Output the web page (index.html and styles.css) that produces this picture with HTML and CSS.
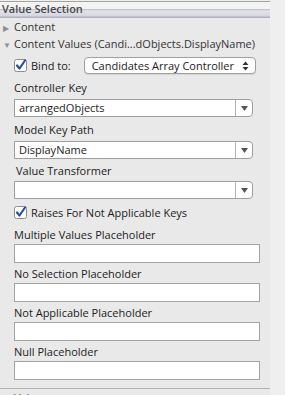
FILE: index.html
```html
<!DOCTYPE html>
<html lang="en">
<head>
    <meta charset="UTF-8">
    <meta name="viewport" content="width=device-width, initial-scale=1.0">
    <title>Value Selection</title>
    <link rel="stylesheet" href="styles.css">
</head>
<body>

    <div class="inspector">
        <div class="section-head">Value Selection</div>

        <div class="disclosure"><span class="tri">&#9654;</span>Content</div>
        <div class="disclosure"><span class="tri open">&#9660;</span>Content Values (Candi...dObjects.DisplayName)</div>

        <div class="group">
            <div class="bind-row">
                <span class="check">
                    <svg width="13" height="13" viewBox="0 0 13 13">
                        <rect x="0.5" y="0.5" width="12" height="12" rx="2" fill="#fff" stroke="#8d8d8d"/>
                        <path d="M3 6.5 L5.5 9.5 L11 1.5" fill="none" stroke="#2a4fa0" stroke-width="2.2" stroke-linecap="round" stroke-linejoin="round"/>
                    </svg>
                </span>
                <span class="check-label">Bind to:</span>
                <div class="popup">
                    <span>Candidates Array Controller</span>
                    <svg width="7" height="10" viewBox="0 0 7 10">
                        <path d="M0.5 4 L3.5 0.5 L6.5 4 Z M0.5 6 L3.5 9.5 L6.5 6 Z" fill="#333"/>
                    </svg>
                </div>
            </div>

            <div class="field-label">Controller Key</div>
            <div class="combo">
                <span class="combo-text">arrangedObjects</span>
                <span class="combo-btn"><svg width="7" height="5" viewBox="0 0 7 5"><path d="M0 0 L7 0 L3.5 5 Z" fill="#555"/></svg></span>
            </div>

            <div class="field-label">Model Key Path</div>
            <div class="combo">
                <span class="combo-text">DisplayName</span>
                <span class="combo-btn"><svg width="7" height="5" viewBox="0 0 7 5"><path d="M0 0 L7 0 L3.5 5 Z" fill="#555"/></svg></span>
            </div>

            <div class="field-label indent">Value Transformer</div>
            <div class="combo combo-tight">
                <span class="combo-text"></span>
                <span class="combo-btn"><svg width="7" height="5" viewBox="0 0 7 5"><path d="M0 0 L7 0 L3.5 5 Z" fill="#555"/></svg></span>
            </div>

            <div class="check-row">
                <span class="check">
                    <svg width="13" height="13" viewBox="0 0 13 13">
                        <rect x="0.5" y="0.5" width="12" height="12" rx="2" fill="#fff" stroke="#8d8d8d"/>
                        <path d="M3 6.5 L5.5 9.5 L11 1.5" fill="none" stroke="#2a4fa0" stroke-width="2.2" stroke-linecap="round" stroke-linejoin="round"/>
                    </svg>
                </span>
                <span class="check-label">Raises For Not Applicable Keys</span>
            </div>

            <div class="field-label wide">Multiple Values Placeholder</div>
            <div class="text-field"></div>

            <div class="field-label">No Selection Placeholder</div>
            <div class="text-field"></div>

            <div class="field-label">Not Applicable Placeholder</div>
            <div class="text-field"></div>

            <div class="field-label">Null Placeholder</div>
            <div class="text-field"></div>
        </div>

        <div class="rule"></div>
        <div class="disclosure"><span class="tri">&#9654;</span>Value</div>
    </div>

</body>
</html>
```

FILE: styles.css
```css
body {
    margin: 0;
    background-color: #efefef;
    font-family: "Open Sans", "Noto Sans", sans-serif;
    font-size: 11px;
    color: #1c1c1c;
    overflow: hidden;
}

.inspector {
    width: 270px;
    height: 395px;
    background-color: #e9e9e9;
}

.section-head {
    margin-top: 1px;
    height: 16px;
    border-top: 1px solid #a4a4a4;
    padding-left: 2px;
    line-height: 13px;
    font-weight: 600;
    color: #4a4a4a;
    background: linear-gradient(to bottom, #f3f3f3 0, #f3f3f3 7px, #bcbcc8 7px, #e2e2ea 9px, #d6d6e0 14px, #b2b2be 15px);
}

.disclosure {
    height: 17px;
    line-height: 17px;
    padding-left: 3px;
    color: #333;
    white-space: nowrap;
}

.tri {
    display: inline-block;
    width: 11px;
    font-size: 8px;
    color: #8f8f8f;
}

.group {
    padding-left: 14px;
    padding-top: 4px;
}

.bind-row {
    display: flex;
    align-items: center;
    height: 19px;
}

.check {
    display: flex;
    width: 13px;
    height: 13px;
}

.check-label {
    margin-left: 4px;
}

.popup {
    margin-left: 13px;
    width: 172px;
    height: 17px;
    box-sizing: border-box;
    display: flex;
    align-items: center;
    justify-content: space-between;
    padding: 0 6px 0 7px;
    background-color: #fff;
    border: 1px solid #a0a0a0;
    border-radius: 4px;
    box-shadow: 0 1px 0 rgba(0, 0, 0, 0.08);
}

.field-label {
    height: 14px;
    line-height: 14px;
    margin-top: 6px;
}

.field-label.indent {
    padding-left: 2px;
    margin-top: 5px;
}

.field-label.wide {
    margin-top: 8px;
}

.combo {
    margin-top: 4px;
    width: 239px;
    height: 18px;
    box-sizing: border-box;
    display: flex;
    background-color: #fff;
    border: 1px solid #9e9e9e;
    border-radius: 0 4px 4px 0;
}

.combo-tight {
    margin-top: 3px;
}

.combo-text {
    flex: 1;
    padding-left: 4px;
    line-height: 16px;
}

.combo-btn {
    width: 16px;
    display: flex;
    align-items: center;
    justify-content: center;
    border-left: 1px solid #b4b4b4;
}

.check-row {
    display: flex;
    align-items: center;
    height: 16px;
    margin-top: 5px;
}

.text-field {
    margin-top: 2px;
    width: 246px;
    height: 19px;
    box-sizing: border-box;
    background-color: #fff;
    border: 1px solid #a4a4a4;
}

.text-field + .field-label {
    margin-top: 4px;
}

.rule {
    margin-top: 8px;
    height: 1px;
    background-color: #b0b0b0;
}
```
